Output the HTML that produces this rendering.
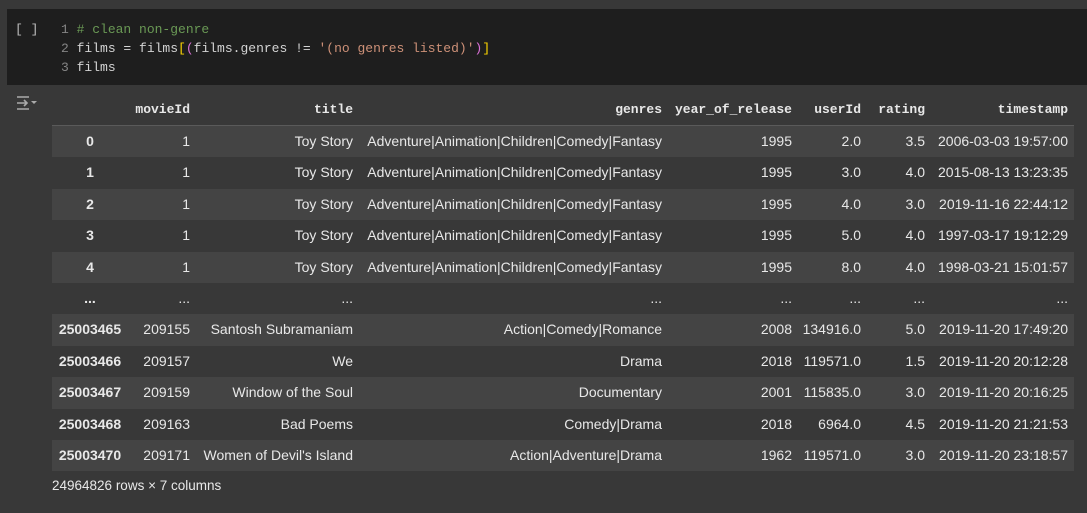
<html><head><style>
body{margin:0;width:1087px;height:513px;background:#383838;overflow:hidden;position:relative;font-family:"Liberation Sans",sans-serif;color:#e8e8e8}
.code{position:absolute;left:7px;top:9px;width:1080px;height:76px;background:#1e1e1e}
.ln{position:absolute;font:13px/19px "Liberation Mono",monospace;color:#d4d4d4;white-space:pre}
.num{color:#858585}
.row{position:absolute;left:52px;width:1022px;height:31.4px}
.c{position:absolute;top:0;line-height:31.4px;font-size:14px;white-space:nowrap}
.r{text-align:right}
.h{font:bold 13px "Liberation Mono",monospace}
</style></head><body>
<div class="code"></div>
<div class="ln" style="left:15px;top:20px;color:#bbb">[ ]</div>
<div class="ln" style="left:61px;top:20px"><span class="num">1 </span><span style="color:#6a9955"># clean non-genre</span></div>
<div class="ln" style="left:61px;top:39px"><span class="num">2 </span>films = films<span style="color:#ffd700">[</span><span style="color:#da70d6">(</span>films.genres != <span style="color:#ce9178">'(no genres listed)'</span><span style="color:#da70d6">)</span><span style="color:#ffd700">]</span></div>
<div class="ln" style="left:61px;top:58px"><span class="num">3 </span>films</div>
<svg style="position:absolute;left:16px;top:95px" width="22" height="16" viewBox="0 0 22 16" fill="none" stroke="#aaa" stroke-width="1.6"><path d="M1 2h12M1 14h12M1 8h10M8 5l3 3-3 3"/><path d="M15 6h6l-3 3z" fill="#aaa" stroke="none"/></svg>
<div id="t"></div>
<div style="position:absolute;left:52px;top:478px;font-size:13.5px">24964826 rows × 7 columns</div>
<script>
const cols=[[190,'movieId'],[353,'title'],[662,'genres'],[792,'year_of_release'],[861,'userId'],[925,'rating'],[1068,'timestamp']];
const G='Adventure|Animation|Children|Comedy|Fantasy';
const rows=[
['0','1','Toy Story',G,'1995','2.0','3.5','2006-03-03 19:57:00'],
['1','1','Toy Story',G,'1995','3.0','4.0','2015-08-13 13:23:35'],
['2','1','Toy Story',G,'1995','4.0','3.0','2019-11-16 22:44:12'],
['3','1','Toy Story',G,'1995','5.0','4.0','1997-03-17 19:12:29'],
['4','1','Toy Story',G,'1995','8.0','4.0','1998-03-21 15:01:57'],
['...','...','...','...','...','...','...','...'],
['25003465','209155','Santosh Subramaniam','Action|Comedy|Romance','2008','134916.0','5.0','2019-11-20 17:49:20'],
['25003466','209157','We','Drama','2018','119571.0','1.5','2019-11-20 20:12:28'],
['25003467','209159','Window of the Soul','Documentary','2001','115835.0','3.0','2019-11-20 20:16:25'],
['25003468','209163','Bad Poems','Comedy|Drama','2018','6964.0','4.5','2019-11-20 21:21:53'],
['25003470','209171','Women of Devil\'s Island','Action|Adventure|Drama','1962','119571.0','3.0','2019-11-20 23:18:57']];
let h='<div class="row" style="top:94px;height:31px;border-bottom:1px solid #5a5a5a">';
cols.forEach(c=>h+=`<div class="c r h" style="right:${1074-c[0]}px;line-height:31px">${c[1]}</div>`);
h+='</div>';
rows.forEach((r,i)=>{h+=`<div class="row" style="top:${126+i*31.4}px;background:${i%2==0?'#444':'#383838'}">`;
h+=`<div class="c" style="left:0;width:76px;text-align:center;font-weight:bold">${r[0]}</div>`;
cols.forEach((c,j)=>h+=`<div class="c r" style="right:${1074-c[0]}px">${r[j+1]}</div>`);
h+='</div>';});
document.getElementById('t').innerHTML=h;
</script>
</body></html>
